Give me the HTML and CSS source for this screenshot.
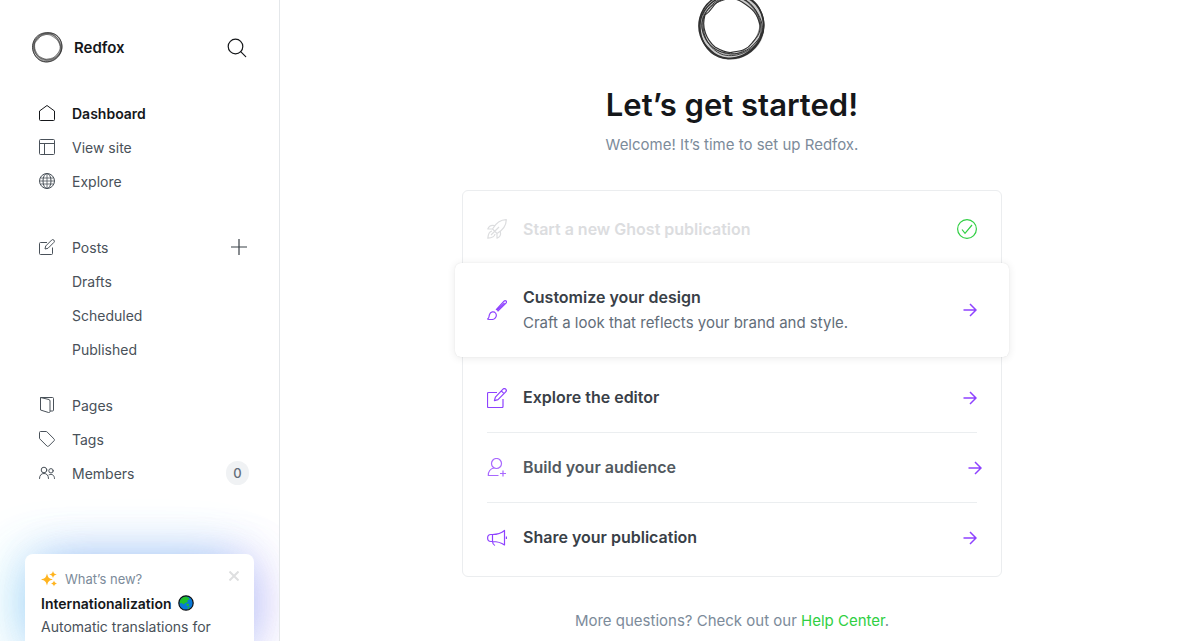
FILE: index.html
```html
<!DOCTYPE html>
<html lang="en">
<head>
<meta charset="utf-8">
<meta name="viewport" content="width=device-width, initial-scale=1">
<title>Redfox - Dashboard</title>
<link rel="stylesheet" href="styles.css">
</head>
<body>
<svg class="defs" aria-hidden="true">
  <symbol id="ring" viewBox="0 -7 68 68">
    <path fill="#777" fill-opacity=".38" fill-rule="evenodd" d="M30-6C48-8 60 3 64 14c5 14 2 27-8 36-12 11-28 13-40 5C4 47-2 30 2 16 6 4 17-5 30-6zM21 1C15 4 14 11 7 15 3 28 9 40 17 47c7 4 13 7 18 5 8-1 14-2 19-9 5-6 9-10 7-18C59 13 55 9 44 2 36-3 28-2 21 1z"/>
    <g fill="none" stroke="#303030">
      <path stroke-width="1.700" d="M32-5.500C50-6 62 4 65 19c3 15-5 28-16 35-12 7-27 6-37-4C3 42-1 30 2 18 6 3 17-5 32-5.500z"/>
      <path stroke-width="1.300" d="M27-4C42-8 57-3 63 12c6 13 2 28-9 37-9 8-22 12-33 8C8 52 2 39 2 26 2 11 13 0 27-4z"/>
      <path stroke-width="1.100" d="M21 1C15 4 14 11 7 15 3 28 9 40 17 47c7 4 13 7 18 5 8-1 14-2 19-9 5-6 9-10 8-18C59 13 55 9 44 2 36-3 28-2 21 1z"/>
      <path stroke-width="1" d="M35-4c10 0 20 8 25 18 5 9 7 18-1 27-8 10-19 15-31 12C15 51 6 41 4 28 2 14 17-4 35-4z"/>
      <path stroke-width=".900" d="M29-1C14 3 5 11 5 24c0 14 7 25 18 30 13 5 30-2 37-13 6-10 3-24-5-34C49-1 40-4 29-1z"/>
      <path stroke-width=".800" stroke-opacity=".7" d="M40-3c12 4 21 17 22 28-1 11-8 21-19 27-12 6-28-1-35-12C1 28 3 12 13 3 20-3 30-6 40-3z"/>
    </g>
  </symbol>
  <symbol id="arrow" viewBox="0 0 14 14">
    <path d="M.5 7h12.500M7 1l6 6-6 6" fill="none" stroke="currentColor" stroke-width="1.500"/>
  </symbol>
  <symbol id="compose" viewBox="0 0 20 20">
    <path d="M10 4.500H1.500a1 1 0 0 0-1 1v13a1 1 0 0 0 1 1H15a1 1 0 0 0 1-1V11" fill="none" stroke="currentColor"/>
    <path d="M16 1.200a1.800 1.800 0 0 1 2.700 2.700L11 11.700l-3.600 1 1-3.600zM14.300 2.900l2.700 2.700" fill="none" stroke="currentColor" stroke-linejoin="round"/>
  </symbol>
</svg>
<div class="app">
  <aside class="sidebar">
    <header class="brand">
      <svg class="brand-logo" aria-hidden="true"><use href="#ring"/></svg>
      <span class="brand-name">Redfox</span>
      <button class="icon-button" type="button" aria-label="Search">
        <svg width="20" height="20" viewBox="0 0 20 20" fill="none" stroke="currentColor" stroke-width="1.200" stroke-linecap="round"><circle cx="8.500" cy="8.500" r="7.300"/><path d="M13.700 13.700l5 5"/></svg>
      </button>
    </header>
    <nav>
      <ul class="nav-group">
        <li><a class="nav-link active" href="#dashboard"><svg class="nav-icon" viewBox="0 0 16 16"><path d="M.5 6v8.500a1 1 0 0 0 1 1h13a1 1 0 0 0 1-1V6L8 .5z"/></svg>Dashboard</a></li>
        <li><a class="nav-link" href="#site"><svg class="nav-icon" viewBox="0 0 16 16"><rect x=".5" y=".5" width="15" height="15" rx="1"/><path d="M.5 4.500h15M5.500 4.500v11"/></svg>View site</a></li>
        <li><a class="nav-link" href="#explore"><svg class="nav-icon" viewBox="0 0 16 16"><circle cx="8" cy="8" r="7.500"/><ellipse cx="8" cy="8" rx="4" ry="7.500"/><path d="M8 .5v15M1.300 5h13.400M1.300 11h13.400M.5 8h15" stroke-width=".8"/></svg>Explore</a></li>
      </ul>
      <ul class="nav-group">
        <li class="nav-row"><a class="nav-link" href="#posts"><svg class="nav-icon" viewBox="0 0 16 16"><path d="M8 3.500H1.500a1 1 0 0 0-1 1v10a1 1 0 0 0 1 1h11a1 1 0 0 0 1-1V8.500"/><path d="M12.600 1.100a1.600 1.600 0 0 1 2.300 2.300L9 9.300l-3 .7.700-3z" stroke-linejoin="round"/></svg>Posts</a>
          <button class="icon-button" type="button" aria-label="New post"><svg width="16" height="16" viewBox="0 0 16 16" stroke="currentColor" stroke-width="1.200"><path d="M8 0v16M0 8h16"/></svg></button></li>
        <li><a class="nav-link sub" href="#drafts">Drafts</a></li>
        <li><a class="nav-link sub" href="#scheduled">Scheduled</a></li>
        <li><a class="nav-link sub" href="#published">Published</a></li>
      </ul>
      <ul class="nav-group compact">
        <li><a class="nav-link" href="#pages"><svg class="nav-icon" viewBox="0 0 16 16"><path d="M1.500 .5h12a1 1 0 0 1 1 1v11.500a1 1 0 0 1-1 1h-2.500M1.500 .5v12.500l8 2.500c1 .2 1.500-.2 1.500-1V4c0-.8-.4-1.300-1-1.500z"/></svg>Pages</a></li>
        <li><a class="nav-link" href="#tags"><svg class="nav-icon" viewBox="0 0 16 16"><path d="M.5 1.500v5.500c0 .5.200.8.500 1.100l6.900 6.900c.6.600 1.300.6 1.900 0l5.200-5.200c.6-.6.600-1.300 0-1.900L8.100 1C7.800.7 7.500.5 7 .5H1.500a1 1 0 0 0-1 1z"/></svg>Tags</a></li>
        <li class="nav-row"><a class="nav-link" href="#members"><svg class="nav-icon" viewBox="0 0 16 16" stroke-linecap="round"><circle cx="5" cy="5" r="2.800"/><circle cx="12" cy="5.800" r="2.200"/><path d="M.5 13.500c0-3.300 1.900-5 4.500-5s4.500 1.700 4.500 5M10 9.800c2.800-1.300 5.500.2 5.500 3.700"/></svg>Members</a><span class="count">0</span></li>
      </ul>
    </nav>
    <section class="news">
      <header class="news-head">
        <svg class="sparkles" viewBox="0 0 16 16" fill="#ffb41f" aria-hidden="true"><path d="M6 2.500C7 6.500 8 7.500 11.800 8.500 8 9.500 7 10.500 6 14.500 5 10.500 4 9.500 0 8.500 4 7.500 5 6.500 6 2.500zM12 0c.7 2.300 1.400 2.900 3.800 3.500C13.400 4.100 12.700 4.700 12 7c-.7-2.300-1.400-2.900-3.800-3.500C10.600 2.900 11.300 2.300 12 0zM13 9.500c.6 2 1.100 2.500 3 3-1.900.5-2.400 1-3 3-.6-2-1.100-2.500-3-3 1.900-.5 2.400-1 3-3z"/></svg>
        <span class="news-label">What’s new?</span>
        <button class="close" type="button" aria-label="Dismiss"><svg width="10" height="10" viewBox="0 0 10 10" stroke="currentColor" stroke-width="2"><path d="M.5.500l9 9M9.500.500l-9 9"/></svg></button>
      </header>
      <h2 class="news-title">Internationalization
        <svg width="16" height="16" viewBox="0 0 16 16" aria-hidden="true"><circle cx="8" cy="8" r="7.200" fill="#0878d8"/><path d="M1.500 6C3 3 5.500 1.300 9 1.300l1 1.700 1.500-.2-.5 2-2 .8 1 1.200-2 1-1 .2-1 1.500-2.500-1.500-1.500.5zM8.500 8.500l2.500.5-.5 2.500L8.500 10.500zM10 12l2 .5-1 1.500-1.500-.5z" fill="#20c02a"/><circle cx="8" cy="8" r="7.200" fill="none" stroke="#111" stroke-width="1.200"/></svg>
      </h2>
      <p class="news-text">Automatic translations for</p>
    </section>
  </aside>
  <main class="main">
    <svg class="hero" viewBox="0 0 68 60" aria-hidden="true"><use href="#ring" x="0" y="-7" width="68" height="68"/></svg>
    <h1>Let’s get started!</h1>
    <p class="welcome">Welcome! It’s time to set up Redfox.</p>
    <ul class="steps">
      <li><a class="step done" href="#start">
        <svg class="step-icon" viewBox="0 0 20 20"><path d="M5.500 10C9 4 13 .8 19.300.700 19.200 7 16 11 10 14.500zM7.500 6.700C4 5.800 2.300 6.500.8 10l4.700 0M13.300 12.500C14.200 16 13 18 10 19.200l0-4.700M5 12c-2.200.4-3.800 2.500-4.200 7.200C5.500 18.800 7.700 17.200 8 15M4 16l8-8"/></svg>
        <span class="step-text"><strong>Start a new Ghost publication</strong></span>
        <svg class="check" viewBox="0 0 20 20"><circle cx="10" cy="10" r="9.400"/><path d="M5 10.500l3 3.800 7-8.300"/></svg></a></li>
      <li class="featured"><a class="step" href="#design">
        <svg class="step-icon" viewBox="0 0 20 20"><path d="M.5 19c2-.8 1.200-2.500 2-4.500 1-2.800 4.500-3.500 6-1.500 1.600 2 .7 5-1.500 6-2 .8-4.500.7-6.500 0zM9 9.800l8-8.600c1.500-1.400 3.300.3 2 1.900l-8.400 8.300M9.900 10.400L17.500 2.800"/></svg>
        <span class="step-text"><strong>Customize your design</strong><span>Craft a look that reflects your brand and style.</span></span>
        <svg class="arrow"><use href="#arrow"/></svg></a></li>
      <li><a class="step" href="#editor">
        <svg class="step-icon"><use href="#compose"/></svg>
        <span class="step-text"><strong>Explore the editor</strong></span>
        <svg class="arrow"><use href="#arrow"/></svg></a></li>
      <li><a class="step hovered" href="#audience">
        <svg class="step-icon" viewBox="0 0 20 20"><circle cx="9.500" cy="5.500" r="5"/><path d="M7 10C3 10.800 1.300 13 1.300 17.500h10.200M16 12.500v6M13 15.500h6"/></svg>
        <span class="step-text"><strong>Build your audience</strong></span>
        <svg class="arrow"><use href="#arrow"/></svg></a></li>
      <li><a class="step" href="#share">
        <svg class="step-icon" viewBox="0 0 20 20"><path d="M5.500 6.500H4C1.800 6.500.6 8 .6 10s1.200 3.500 3.400 3.500h1.500zM5.500 6.500C10 6.500 14 5.500 17.500 2.500v14.500C14 14.500 10 13.500 5.500 13.500M5.500 13.500c.1 2 .8 3.300 2.500 4M19.400 8.500v2.500"/></svg>
        <span class="step-text"><strong>Share your publication</strong></span>
        <svg class="arrow"><use href="#arrow"/></svg></a></li>
    </ul>
    <p class="help">More questions? Check out our <a href="#help">Help Center</a>.</p>
  </main>
</div>
</body>
</html>
```
FILE: styles.css
```css
* { box-sizing: border-box; }
body { margin: 0; background: #fff; color: #15171a; font-family: Inter, "Liberation Sans", sans-serif; font-size: 14px; }
h1, h2, p, ul { margin: 0; padding: 0; }
ul { list-style: none; }
a { color: inherit; text-decoration: none; }
button { padding: 0; border: 0; background: none; color: inherit; cursor: pointer; }
svg { flex: none; }
.defs { position: absolute; width: 0; height: 0; }
.app { display: flex; height: 100vh; overflow: hidden; }

.sidebar { flex: none; width: 280px; height: 100%; overflow: hidden; padding-top: 27px; border-right: 1px solid #e4e7ea; }
.brand { display: flex; align-items: center; height: 41px; padding: 0 32px; margin-bottom: 28px; }
.brand-logo { width: 31px; height: 31px; }
.brand-name { flex: 1; margin-left: 11px; font-size: 15px; font-weight: 600; }
.icon-button { display: grid; place-items: center; }
.nav-group { margin-bottom: 32px; }
.nav-group:nth-child(2) { margin-bottom: 22px; }
.nav-group.compact { margin-bottom: 64px; }
.nav-row { display: flex; align-items: center; padding-right: 32px; color: #394047; }
.nav-row .nav-link { flex: 1; }
.nav-link { display: flex; align-items: center; gap: 17px; height: 34px; padding-left: 39px; color: #495159; }
.nav-link.active { color: #15171a; font-weight: 600; }
.nav-link.sub { padding-left: 72px; }
.nav-icon { width: 16px; height: 16px; fill: none; stroke: currentColor; }
.count { display: grid; place-items: center; width: 23px; height: 24px; margin-right: -2px; border-radius: 12px; background: #f0f2f4; color: #626d79; font-size: 13px; font-weight: 500; }

.news { margin: 0 25px; padding: 13px 15px 14px 16px; border-radius: 8px; background: #fff; box-shadow: -14px 0 60px -8px rgba(56, 226, 239, .32), 0 0 50px -8px rgba(92, 136, 244, .4), 14px 0 50px -10px rgba(189, 91, 236, .3); }
.news-head { display: flex; align-items: center; gap: 8px; height: 23px; }
.sparkles { width: 16px; height: 16px; }
.news-label { flex: 1; color: #7c8b9a; font-size: 13px; }
.close { display: grid; margin-top: -5px; color: #dedfe0; }
.news-title { display: flex; align-items: center; gap: 6px; height: 26px; font-size: 14px; font-weight: 600; }
.news-text { color: #495159; font-size: 14px; line-height: 22px; }

.main { flex: 1; min-width: 0; display: flex; flex-direction: column; align-items: center; overflow: hidden; }
.hero { width: 68px; height: 60px; }
h1 { margin-top: 25px; font-size: 31px; font-weight: 600; line-height: 40px; }
.welcome { margin-top: 8px; color: #7c8b9a; font-size: 15px; line-height: 24px; }
.steps { width: 100%; max-width: 540px; margin-top: 33px; padding: 4px 24px; border: 1px solid #ebedef; border-radius: 6px; }
.step { display: flex; align-items: center; min-height: 70px; border-bottom: 1px solid #ebeef0; }
.step.done { min-height: 68px; border: 0; }
.steps li:last-child .step { min-height: 69px; border: 0; }
.featured { margin: 0 -32px 6px; padding: 0 32px; border-radius: 6px; background: #fff; box-shadow: 0 0 1px rgba(0, 0, 0, .12), 0 1px 8px rgba(0, 0, 0, .09); position: relative; }
.steps .featured .step { min-height: 94px; border: 0; }
.step-icon { width: 20px; height: 20px; fill: none; stroke: currentColor; stroke-width: 1.2; color: #8e42ff; stroke-linejoin: round; }
.step-text { flex: 1; margin-left: 16px; color: #626d79; font-size: 15px; line-height: 25px; }
.step-text > * { display: block; }
.step strong { color: #394047; font-size: 16px; font-weight: 600; }
.done .step-icon { color: #dcdddf; }
.step.done strong { color: #dcdddf; }
.check { width: 20px; height: 20px; fill: none; stroke: #30cf43; stroke-width: 1.2; }
.arrow { width: 14px; height: 14px; color: #8e42ff; }
.hovered .arrow { margin-right: -5px; }
.step.hovered strong { color: #525960; }
.hovered .step-icon { color: #a868ff; }
.help { margin-top: 32px; color: #7c8b9a; font-size: 15px; line-height: 24px; }
.help a { color: #30cf43; }
```
